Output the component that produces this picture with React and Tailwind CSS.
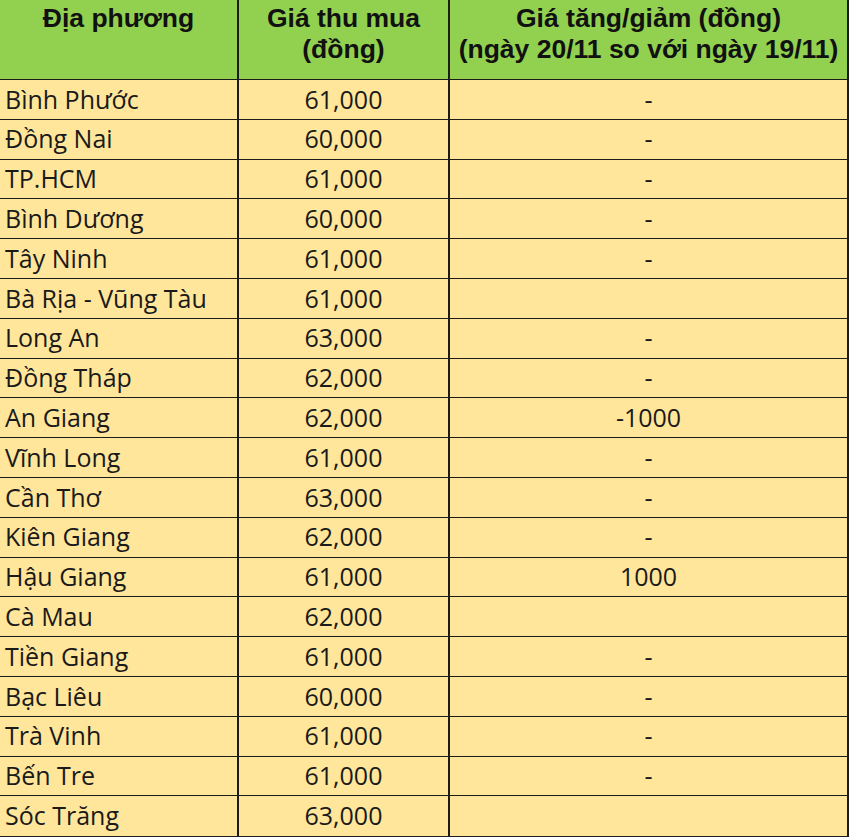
import React from "react";

const rows = [
  ["Bình Phước", "61,000", "-"],
  ["Đồng Nai", "60,000", "-"],
  ["TP.HCM", "61,000", "-"],
  ["Bình Dương", "60,000", "-"],
  ["Tây Ninh", "61,000", "-"],
  ["Bà Rịa - Vũng Tàu", "61,000", ""],
  ["Long An", "63,000", "-"],
  ["Đồng Tháp", "62,000", "-"],
  ["An Giang", "62,000", "-1000"],
  ["Vĩnh Long", "61,000", "-"],
  ["Cần Thơ", "63,000", "-"],
  ["Kiên Giang", "62,000", "-"],
  ["Hậu Giang", "61,000", "1000"],
  ["Cà Mau", "62,000", ""],
  ["Tiền Giang", "61,000", "-"],
  ["Bạc Liêu", "60,000", "-"],
  ["Trà Vinh", "61,000", "-"],
  ["Bến Tre", "61,000", "-"],
  ["Sóc Trăng", "63,000", ""],
];

export default function App() {
  return (
    <div className="w-[850px] h-[837px] bg-white overflow-hidden">
      <div className="w-[849px] border-r-2 border-b-2 border-[#1c1c1c]">
        <div className="grid grid-cols-[239px_211px_1fr] h-[80px] bg-[#92D050] border-b-[1.5px] border-[#1c1c1c] font-['Liberation_Sans',Arial,sans-serif] font-bold text-[26.5px] leading-[31px] text-[#111]">
          <div className="border-r-2 border-[#1c1c1c] text-center pt-[3px]">Địa phương</div>
          <div className="border-r-2 border-[#1c1c1c] text-center pt-[3px]">Giá thu mua<br />(đồng)</div>
          <div className="text-center pt-[3px] whitespace-nowrap">Giá tăng/giảm (đồng)<br />(ngày 20/11 so với ngày 19/11)</div>
        </div>
        {rows.map((r, i) => (
          <div
            key={i}
            className={`grid grid-cols-[239px_211px_1fr] h-[39.8px] bg-[#FFE69A] font-['Open_Sans',sans-serif] text-[25px] text-[#1a1a1a] ${i < rows.length - 1 ? "border-b-[1.5px] border-[#1c1c1c]" : ""}`}
          >
            <div className="border-r-2 border-[#1c1c1c] pl-[5px] flex items-center whitespace-nowrap">{r[0]}</div>
            <div className="border-r-2 border-[#1c1c1c] flex items-center justify-center">{r[1]}</div>
            <div className="flex items-center justify-center">{r[2]}</div>
          </div>
        ))}
      </div>
    </div>
  );
}
